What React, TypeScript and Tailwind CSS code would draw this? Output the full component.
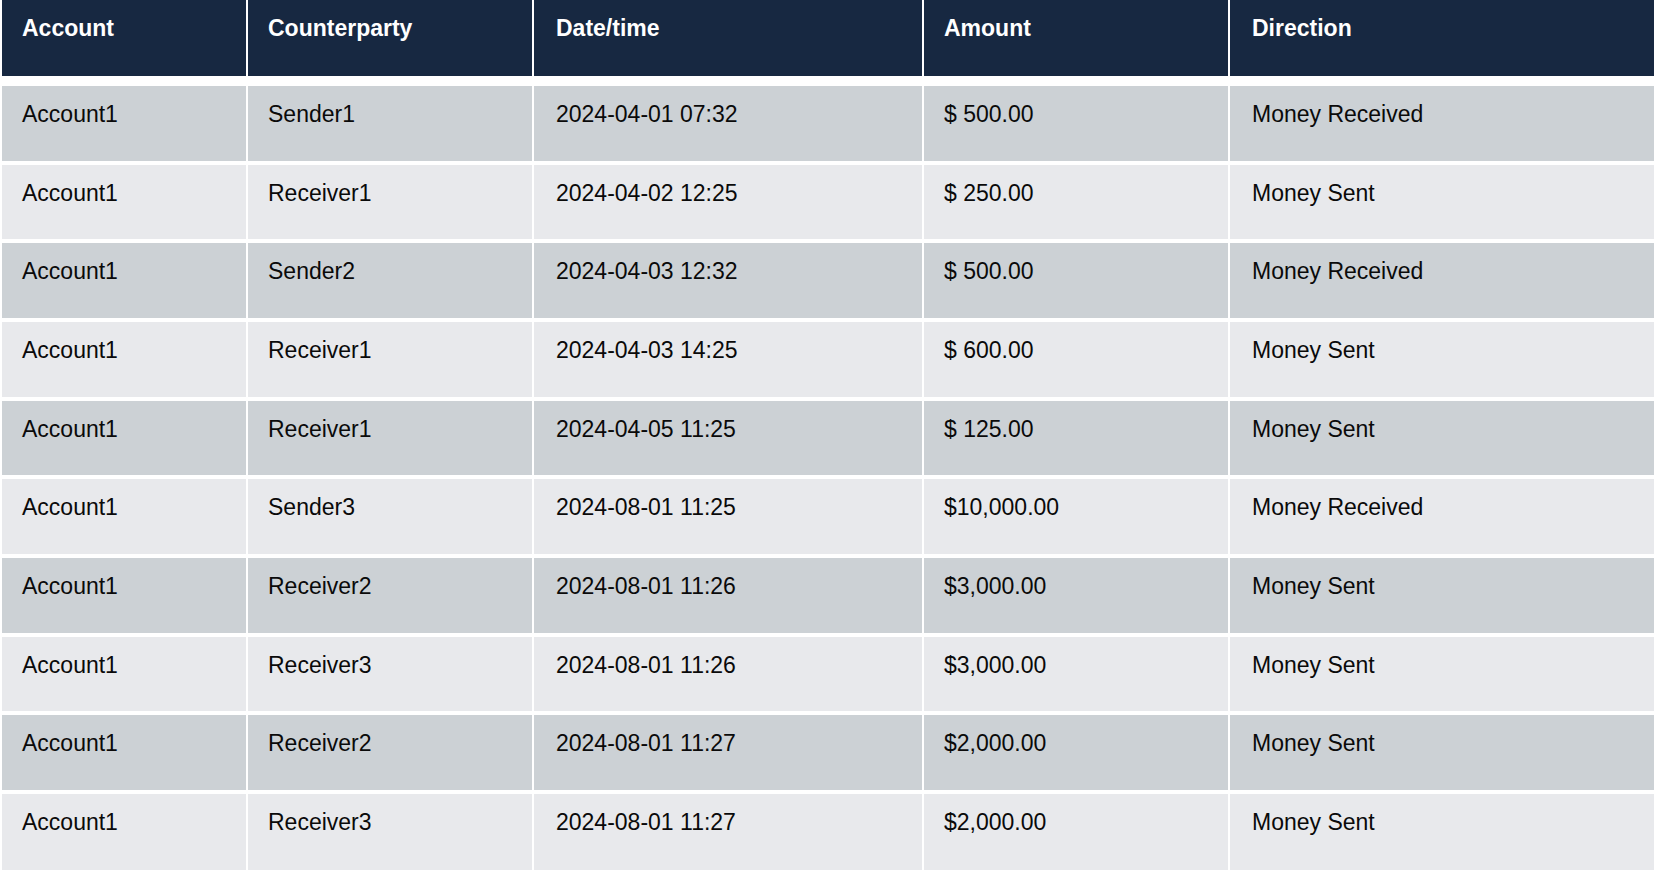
const rows = [
  { account: "Account1", party: "Sender1", date: "2024-04-01 07:32", amount: "$ 500.00", direction: "Money Received" },
  { account: "Account1", party: "Receiver1", date: "2024-04-02 12:25", amount: "$ 250.00", direction: "Money Sent" },
  { account: "Account1", party: "Sender2", date: "2024-04-03 12:32", amount: "$ 500.00", direction: "Money Received" },
  { account: "Account1", party: "Receiver1", date: "2024-04-03 14:25", amount: "$ 600.00", direction: "Money Sent" },
  { account: "Account1", party: "Receiver1", date: "2024-04-05 11:25", amount: "$ 125.00", direction: "Money Sent" },
  { account: "Account1", party: "Sender3", date: "2024-08-01 11:25", amount: "$10,000.00", direction: "Money Received" },
  { account: "Account1", party: "Receiver2", date: "2024-08-01 11:26", amount: "$3,000.00", direction: "Money Sent" },
  { account: "Account1", party: "Receiver3", date: "2024-08-01 11:26", amount: "$3,000.00", direction: "Money Sent" },
  { account: "Account1", party: "Receiver2", date: "2024-08-01 11:27", amount: "$2,000.00", direction: "Money Sent" },
  { account: "Account1", party: "Receiver3", date: "2024-08-01 11:27", amount: "$2,000.00", direction: "Money Sent" },
];

const headers = ["Account", "Counterparty", "Date/time", "Amount", "Direction"];
const pads = ["pl-[20px]", "pl-[20px]", "pl-[22px]", "pl-[20px]", "pl-[22px]"];

const gridCols = "grid grid-cols-[244px_284px_388px_304px_424px] gap-x-[2px]";

export default function App() {
  return (
    <div className="min-h-[874px] bg-white pl-[2px] font-['Liberation_Sans',Arial,sans-serif] text-[23px] leading-[26px]">
      <div className={`${gridCols} h-[76px]`}>
        {headers.map((h, i) => (
          <div key={h} className={`bg-[#172841] pt-[15px] font-bold text-white ${pads[i]}`}>
            {h}
          </div>
        ))}
      </div>

      <div className="mt-[10px] flex flex-col gap-y-[4px]">
        {rows.map((r, idx) => {
          const bg = idx % 2 === 0 ? "bg-[#ccd1d5]" : "bg-[#e8e9ec]";
          const cells = [r.account, r.party, r.date, r.amount, r.direction];
          return (
            <div
              key={idx}
              className={`${gridCols} ${idx === rows.length - 1 ? "h-[76px]" : "h-[74.67px]"}`}
            >
              {cells.map((c, i) => (
                <div key={i} className={`${bg} pt-[15px] text-[#0a0a0a] ${pads[i]}`}>
                  {c}
                </div>
              ))}
            </div>
          );
        })}
      </div>
    </div>
  );
}
